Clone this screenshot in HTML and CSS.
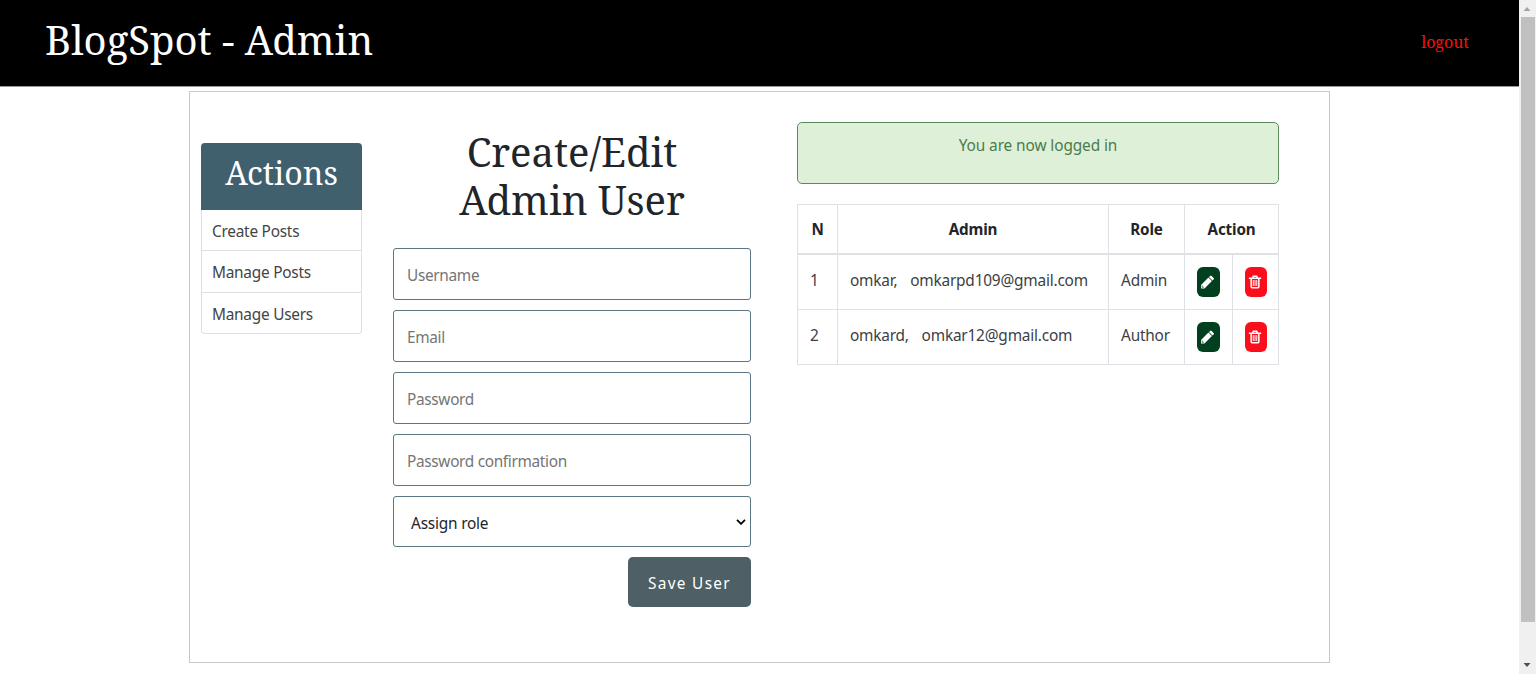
FILE: index.html
```html
<!DOCTYPE html>
<html lang="en">
<head>
<meta charset="utf-8">
<title>BlogSpot - Admin</title>
<link rel="stylesheet" href="styles.css">
</head>
<body>
<svg class="sprite" aria-hidden="true">
  <symbol id="pencil" viewBox="0 0 16 16">
    <path fill="#fff" d="M10.800 1.500q.8-.8 1.600 0l2.100 2.100q.8.800 0 1.600L13.300 6.400 9.600 2.700zM9 3.300l3.700 3.700-7.900 7.800H1.100v-3.700z"/>
    <path fill="none" stroke="#00401f" stroke-width=".7" d="M2.300 11.700v1.900h1.900"/>
  </symbol>
  <symbol id="trash" viewBox="0 0 16 16">
    <path fill="none" stroke="#fff" stroke-width="1.700" d="M1 3.800h14M5.300 4l.7-2.500h4L10.700 4M3.600 4v9.500q0 1 1 1h6.800q1 0 1-1V4"/>
    <path fill="none" stroke="#fff" stroke-width="1.100" d="M6 5.800v6.800M8 5.800v6.800M10 5.800v6.800"/>
  </symbol>
</svg>
<div class="window">
  <div class="page">
    <header class="header">
      <h1 class="brand">BlogSpot - Admin</h1>
      <a class="logout">logout</a>
    </header>
    <main class="container">
      <nav class="menu">
        <h2 class="menu-title"><span>Actions</span></h2>
        <a class="menu-item">Create Posts</a>
        <a class="menu-item">Manage Posts</a>
        <a class="menu-item">Manage Users</a>
      </nav>
      <form class="form">
        <h1 class="form-title">Create/Edit Admin User</h1>
        <input class="field" type="text" placeholder="Username">
        <input class="field" type="email" placeholder="Email">
        <input class="field" type="password" placeholder="Password">
        <input class="field" type="password" placeholder="Password confirmation">
        <div class="field select"><span>Assign role</span>
          <svg class="chevron" viewBox="0 0 10 6"><path d="M1 .8l4 4 4-4" fill="none" stroke="#000" stroke-width="1.800"/></svg>
        </div>
        <button class="save" type="button">Save User</button>
      </form>
      <section class="users">
        <div class="message">You are now logged in</div>
        <table class="table">
          <colgroup><col class="c-n"><col class="c-admin"><col class="c-role"><col class="c-edit"><col class="c-del"></colgroup>
          <thead><tr><th>N</th><th>Admin</th><th>Role</th><th colspan="2">Action</th></tr></thead>
          <tbody>
            <tr><td>1</td><td>omkar, <span class="mail">omkarpd109@gmail.com</span></td><td>Admin</td>
              <td class="act"><a class="icon edit"><svg><use href="#pencil"/></svg></a></td><td class="act"><a class="icon delete"><svg><use href="#trash"/></svg></a></td></tr>
            <tr><td>2</td><td>omkard, <span class="mail">omkar12@gmail.com</span></td><td>Author</td>
              <td class="act"><a class="icon edit"><svg><use href="#pencil"/></svg></a></td><td class="act"><a class="icon delete"><svg><use href="#trash"/></svg></a></td></tr>
          </tbody>
        </table>
      </section>
    </main>
  </div>
  <div class="scrollbar">
    <svg class="arrow" viewBox="0 0 16 16"><path d="M4.500 11h7L8 7z" fill="#a3a3a3"/></svg>
    <div class="track"><div class="thumb"></div></div>
    <svg class="arrow" viewBox="0 0 16 16"><path d="M4.500 5h7L8 9z" fill="#505050"/></svg>
  </div>
</div>
</body>
</html>
```
FILE: styles.css
```css
* { box-sizing: border-box; }
body {
  margin: 0;
  overflow: hidden;
  background: #fff;
  color: #212529;
  font: 15.4px/24px "Noto Sans", sans-serif;
  letter-spacing: -.25px;
}
.sprite { display: none; }
.window { display: flex; height: 674px; }
.page { flex: 1; }
.header {
  display: flex;
  justify-content: space-between;
  height: 87px;
  padding: 16px 50px 0 45px;
  background: #000;
  border-bottom: 1px solid #999;
}
.brand, .menu-title, .form-title, .logout {
  margin: 0;
  font-family: "Noto Serif", "DejaVu Serif", serif;
  font-stretch: condensed;
  font-weight: 400;
  letter-spacing: 0;
}
.brand { color: #fff; font-size: 40px; line-height: 48px; }
.logout { margin-top: 14px; color: #f01010; font-size: 16px; }
.container {
  display: flex;
  width: 1141px;
  height: 572px;
  margin: 4px 0 0 189px;
  border: 1px solid #c8c8c8;
}
.menu {
  width: 161px;
  height: 191px;
  margin: 51px 0 0 11px;
  border: 1px solid #dfdfdf;
  border-top: 0;
  border-radius: 4px;
}
.menu-title {
  height: 67px;
  margin: 0 -1px;
  padding-top: 10px;
  border-radius: 4px 4px 0 0;
  background: #40606e;
  color: #fff;
  font-size: 32px;
  line-height: 40px;
  text-align: center;
}
.menu-item {
  display: block;
  height: 41px;
  padding: 10px 10px 0;
  border-bottom: 1px solid #dfdfdf;
  color: #444;
}
.menu-item + .menu-item { height: 42px; }
.menu-item:last-child { border-bottom: 0; }
.form { width: 358px; margin: 36px 0 0 31px; }
.form-title { margin-bottom: 24px; padding: 0 40px; font-size: 40px; line-height: 48px; text-align: center; }
.field {
  display: block;
  width: 358px;
  height: 52px;
  margin: 0 0 10px;
  padding: 3px 13px 0;
  border: 1px solid #5c7684;
  border-radius: 3px;
  background: #fff;
  color: #212529;
  font: inherit;
  letter-spacing: -.33px;
}
.field::placeholder { color: #757575; opacity: 1; }
.select {
  display: flex;
  align-items: center;
  justify-content: space-between;
  height: 51px;
  padding: 5px 4px 0 17px;
  letter-spacing: -.2px;
}
.chevron { width: 10px; height: 6px; margin-top: -5px; }
.save {
  display: block;
  width: 123px;
  height: 50px;
  margin: 0 0 0 auto;
  padding: 4px 0 0;
  border: 0;
  border-radius: 5px;
  background: #4e6066;
  color: #fff;
  font: inherit;
  letter-spacing: 1.300px;
}
.users { width: 482px; margin: 30px 0 0 46px; }
.message {
  height: 62px;
  padding-top: 11px;
  border: 1px solid #5a8a5c;
  border-radius: 5px;
  background: #dff0d8;
  color: #4b7b4d;
  text-align: center;
  letter-spacing: -.1px;
}
.table {
  width: 482px;
  margin-top: 20px;
  border-collapse: collapse;
  table-layout: fixed;
}
.c-n { width: 40px; }
.c-admin { width: 271px; }
.c-role { width: 76px; }
.c-edit { width: 48px; }
.c-del { width: 46px; }
.table th, .table td { border: 1px solid #dee2e6; vertical-align: top; text-align: left; white-space: nowrap; }
.table th { height: 49px; padding: 12px 0 0; border-bottom-width: 2px; text-align: center; font-size: 15.2px; font-weight: 700; letter-spacing: -.15px; }
.table td { height: 55px; padding: 14px 12px 0; color: #3c4044; letter-spacing: -.2px; }
.table tbody tr:first-child td { height: 56px; }
.table .act { padding-top: 12px; }
.mail { margin-left: 9px; }
.icon { display: flex; align-items: center; height: 30px; border-radius: 6px; margin-right: -12px; padding-left: 3px; }
.icon svg { width: 15px; height: 16px; }
.edit { width: 23px; background: #00401f; }
.delete { width: 22px; background: #fa0e1c; }
.delete svg { width: 14px; }
.scrollbar { display: flex; flex-direction: column; width: 17px; background: #f0f0f0; }
.arrow { width: 16px; height: 16px; }
.track { flex: 1; padding: 1px 1px 0 2px; }
.thumb { height: 605px; background: #c0c0c0; }
```
